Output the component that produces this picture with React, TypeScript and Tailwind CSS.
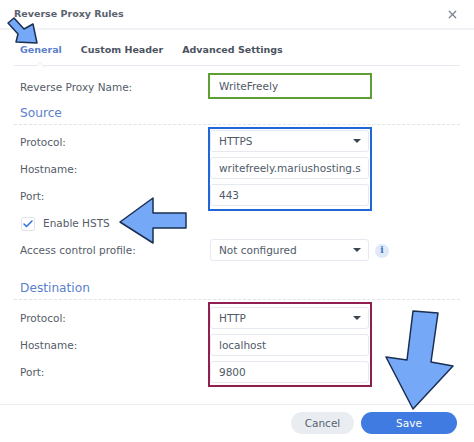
import { Check, X } from 'lucide-react'

const FieldLabel = ({ children }: { children: string }) => (
  <div className="h-[22px] leading-[22px]">{children}</div>
)

const Field = ({ value, select }: { value: string; select?: boolean }) => (
  <div className="h-[22px] w-[159px] flex items-center justify-between pt-[2px] pl-[8px] pr-[7px] bg-white border border-[#e6e9ef] rounded-[3px] text-[#4f5a68] overflow-hidden whitespace-nowrap">
    <span>{value}</span>
    {select && <span className="w-0 h-0 mb-[2px] border-x-[4px] border-x-transparent border-t-[4px] border-t-[#3c4554]" />}
  </div>
)

const Section = ({ title }: { title: string }) => (
  <div className="h-[26px] mx-[-6px] px-[6px] pt-[1px] border-b border-dashed border-[#dfe3ea] text-[12.2px] leading-[26px] text-[#5b80cc]">
    {title}
  </div>
)

// boxed group of three fields with the labels in a column to the left
const FieldGroup = ({ values, boxClass, labelClass }: { values: string[]; boxClass: string; labelClass: string }) => (
  <div className="flex">
    <div className={`w-[188px] flex flex-col gap-[5px] ${labelClass}`}>
      <FieldLabel>Protocol:</FieldLabel>
      <FieldLabel>Hostname:</FieldLabel>
      <FieldLabel>Port:</FieldLabel>
    </div>
    <div className={`w-[164px] border-2 flex flex-col gap-[5px] ${boxClass}`}>
      <Field value={values[0]} select />
      <Field value={values[1]} />
      <Field value={values[2]} />
    </div>
  </div>
)

export default function App() {
  return (
    <div className="relative w-[474px] h-[442px] bg-white overflow-hidden text-[10.5px] text-[#555c68] font-['DejaVu_Sans',sans-serif]">
      {/* Header */}
      <div className="h-[30px] px-[14px] border-b-2 border-[#f0f2f5] flex items-center justify-between">
        <span className="font-bold text-[#5a6270] text-[9.5px]">Reverse Proxy Rules</span>
        <X size={13} className="mr-[1px] text-[#7b838f]" strokeWidth={2.25} />
      </div>

      {/* Tabs */}
      <div className="relative mx-[14px] h-[36px] border-b border-[#e6e9ef] flex items-center gap-[19px] pl-[6px] pt-[5px] text-[9.5px] font-bold text-[#4b5361]">
        <span className="text-[#5b80cc]">General</span>
        <span>Custom Header</span>
        <span>Advanced Settings</span>
        <span className="absolute left-[22px] bottom-[-1px] w-[10px] h-[6px] bg-white border-l border-t border-[#e6e9ef] rotate-45 origin-center translate-y-[3px] scale-75" />
      </div>

      {/* Content */}
      <div className="px-[20px]">
        <div className="flex items-start mt-[7px]">
          <div className="w-[188px] h-[26px] leading-[28px]">Reverse Proxy Name:</div>
          <div className="w-[164px] h-[26px] border-2 border-[#5f9e35] flex items-center pt-[1px] pl-[9px] text-[#4f5a68]">WriteFreely</div>
        </div>

        <Section title="Source" />
        <div className="mt-[2px]">
          <FieldGroup
            values={['HTTPS', 'writefreely.mariushosting.s', '443']}
            boxClass="h-[84px] pt-[1px] border-[#1f66d8]"
            labelClass="pt-[4px]"
          />
        </div>

        <label className="h-[24px] flex items-center gap-[8px] pl-[1px]">
          <span className="w-[14px] h-[14px] mt-[1px] border border-[#e1e5eb] rounded-[2px] flex items-center justify-center">
            <Check size={12} strokeWidth={3} className="text-[#2f6fdc]" />
          </span>
          <span className="mt-[2px]">Enable HSTS</span>
        </label>

        <div className="flex items-center mt-[4px]">
          <div className="w-[190px] h-[22px] leading-[22px]">Access control profile:</div>
          <Field value="Not configured" select />
          <span className="ml-[6px] mt-[1px] w-[14px] h-[14px] rounded-full bg-[#dfe9f8] text-[#3f6fc0] flex items-center justify-center text-[9px] font-bold font-['DejaVu_Serif',serif]">i</span>
        </div>

        <div className="mt-[13px]">
          <Section title="Destination" />
        </div>
        <div className="mt-[2px]">
          <FieldGroup
            values={['HTTP', 'localhost', '9800']}
            boxClass="h-[85px] pt-[3px] border-[#8e1f4f]"
            labelClass="pt-[5px]"
          />
        </div>
      </div>

      {/* Footer */}
      <div className="mt-[17px] border-t border-[#e9ecf0] pt-[7px] pr-[17px] flex justify-end gap-[7px]">
        <button className="w-[63px] h-[22px] pt-[1px] rounded-full bg-[#e9edf2] text-[#5a6270]">Cancel</button>
        <button className="w-[96px] h-[22px] pt-[1px] rounded-full bg-[#3f7be0] text-white">Save</button>
      </div>

      {/* Annotation arrows over the screenshot */}
      <svg className="absolute inset-0 pointer-events-none" width="474" height="442" viewBox="0 0 474 442">
        <g fill="#75a8f7" stroke="#1b2f52" strokeWidth="1.5" strokeLinejoin="round">
          <polygon points="37,43 33,24 24,29 14,18 8,23 18,34 16,42" />
          <polygon points="120,222 153,198 153,213 186,213 186,228 153,228 153,243" />
          <polygon points="413,409 386,357 407,360 413,311 438,313 431,362 453,366" />
        </g>
      </svg>
    </div>
  )
}
